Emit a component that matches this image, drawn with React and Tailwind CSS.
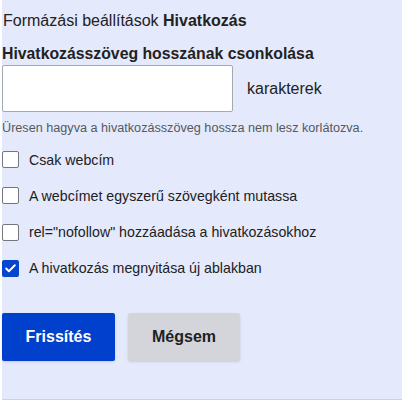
import { Check } from "lucide-react";

const options = [
  { label: "Csak webcím", checked: false },
  { label: "A webcímet egyszerű szövegként mutassa", checked: false },
  { label: 'rel="nofollow" hozzáadása a hivatkozásokhoz', checked: false },
  { label: "A hivatkozás megnyitása új ablakban", checked: true },
];

const App = () => {
  return (
    <div className="w-[402px] h-[402px] bg-white font-['Liberation_Sans',Arial,sans-serif]">
      <div className="ml-[2px] h-[400px] bg-[#e5e9fc] border-b border-[#cfd2dc] text-[#222]">
        <h1 className="pt-[11px] pl-px text-[16px] leading-[20px]">
          Formázási beállítások <span className="font-bold">Hivatkozás</span>
        </h1>

        <div className="mt-[14px] text-[15.8px] leading-[18px] font-bold">
          Hivatkozásszöveg hosszának csonkolása
        </div>

        <div className="mt-[2px] flex items-center gap-[14px]">
          <input
            type="text"
            className="w-[231px] h-[47px] bg-white border border-[#a2a9b1] rounded-[2px] outline-none px-2"
          />
          <span className="text-[16px]">karakterek</span>
        </div>

        <p className="mt-[9px] text-[12.65px] leading-[15px] text-[#54595d]">
          Üresen hagyva a hivatkozásszöveg hossza nem lesz korlátozva.
        </p>

        <div className="mt-[15px] flex flex-col gap-[19.3px]">
          {options.map((o) => (
            <label key={o.label} className="flex items-center gap-[10px] h-[17px]">
              {o.checked ? (
                <span className="w-[17px] h-[17px] rounded-[2px] bg-[#0645ce] flex items-center justify-center">
                  <Check size={13} strokeWidth={3.5} className="text-white" />
                </span>
              ) : (
                <span className="w-[17px] h-[17px] rounded-[2px] bg-white border border-[#72777d]" />
              )}
              <span className="text-[14.2px] leading-[18px] text-[#202122]">{o.label}</span>
            </label>
          ))}
        </div>

        <div className="mt-[36px] flex gap-[13px]">
          <button className="w-[113px] h-[48px] rounded-[2px] bg-[#0040cc] text-white font-bold text-[16px] shadow-sm">
            Frissítés
          </button>
          <button className="w-[112px] h-[48px] rounded-[2px] bg-[#d4d5da] text-[#202122] font-bold text-[16px] shadow-sm">
            Mégsem
          </button>
        </div>
      </div>
    </div>
  );
};

export default App;
